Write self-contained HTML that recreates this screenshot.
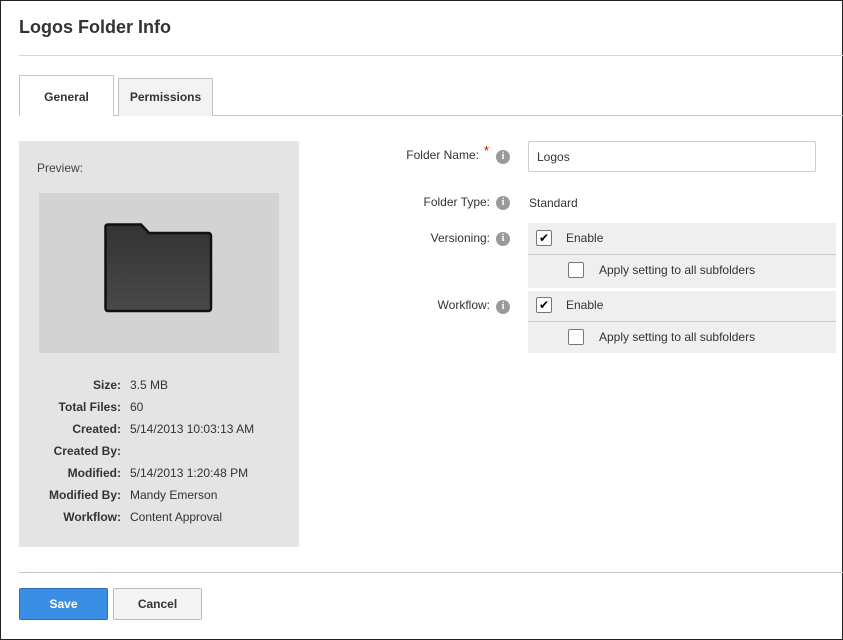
<!DOCTYPE html>
<html><head><style>
*{margin:0;padding:0;box-sizing:border-box}
body{width:843px;height:640px;position:relative;font-family:"Liberation Sans",Arial,sans-serif;font-size:12px;color:#333;background:#fff;overflow:hidden}
.a{position:absolute}
.frame{left:0;top:0;width:843px;height:640px;border:1px solid #222;border-top-color:#222}
.lbl{text-align:right;width:121px;font-weight:bold;color:#333}
.val{left:130px}
.rl{text-align:right;width:100px;left:390px}
.info{width:14px;height:14px;border-radius:50%;background:#999;color:#fff;font-size:10px;font-weight:bold;text-align:center;line-height:14px;font-family:"Liberation Serif",serif}
.cb{width:16px;height:16px;border:1px solid #777;background:#fff;border-radius:2px}
.ck{font-size:12px;color:#000}
</style></head><body>
<div class="a frame"></div>
<div class="a" style="left:19px;top:17px;font-size:18px;font-weight:bold;color:#333">Logos Folder Info</div>
<div class="a" style="left:19px;top:55px;width:824px;height:1px;background:#d6d6d6"></div>
<div class="a" style="left:19px;top:115px;width:824px;height:1px;background:#c4c4c4"></div>
<div class="a" style="left:118px;top:78px;width:95px;height:38px;background:#f3f3f3;border:1px solid #c4c4c4;border-bottom:none"></div>
<div class="a" style="left:118px;top:90px;width:95px;text-align:center;font-weight:bold">Permissions</div>
<div class="a" style="left:19px;top:75px;width:95px;height:41px;background:#fff;border:1px solid #c4c4c4;border-bottom:none"></div>
<div class="a" style="left:19px;top:90px;width:95px;text-align:center;font-weight:bold">General</div>
<div class="a" style="left:19px;top:141px;width:280px;height:406px;background:#e4e4e4"></div>
<div class="a" style="left:37px;top:161px;color:#444">Preview:</div>
<div class="a" style="left:39px;top:193px;width:240px;height:160px;background:#d3d3d3"></div>
<svg class="a" style="left:103px;top:223px" width="110" height="90" viewBox="0 0 110 90">
<defs><linearGradient id="g" x1="0" y1="0" x2="0" y2="1"><stop offset="0" stop-color="#333"/><stop offset="1" stop-color="#4a4a4a"/></linearGradient></defs>
<path d="M2.5 4 Q2.5 1.5 5 1.5 H38 L46 10 H105 Q108 10 108 13 V85 Q108 88 105 88 H5 Q2.5 88 2.5 85 Z" fill="url(#g)" stroke="#111" stroke-width="2.5"/>
</svg>
<div class="a lbl" style="top:378px">Size:</div><div class="a val" style="top:378px">3.5 MB</div>
<div class="a lbl" style="top:400px">Total Files:</div><div class="a val" style="top:400px">60</div>
<div class="a lbl" style="top:422px">Created:</div><div class="a val" style="top:422px">5/14/2013 10:03:13 AM</div>
<div class="a lbl" style="top:444px">Created By:</div>
<div class="a lbl" style="top:466px">Modified:</div><div class="a val" style="top:466px">5/14/2013 1:20:48 PM</div>
<div class="a lbl" style="top:488px">Modified By:</div><div class="a val" style="top:488px">Mandy Emerson</div>
<div class="a lbl" style="top:510px">Workflow:</div><div class="a val" style="top:510px">Content Approval</div>
<div class="a rl" style="top:148px;left:379px">Folder Name:</div>
<div class="a" style="left:484px;top:143px;color:#d00;font-size:13px">*</div>
<div class="a info" style="left:496px;top:150px">i</div>
<div class="a" style="left:528px;top:141px;width:288px;height:31px;border:1px solid #ccc;border-radius:2px"></div>
<div class="a" style="left:537px;top:150px">Logos</div>
<div class="a rl" style="top:195px">Folder Type:</div>
<div class="a info" style="left:496px;top:196px">i</div>
<div class="a" style="left:529px;top:196px">Standard</div>
<div class="a rl" style="top:231px">Versioning:</div>
<div class="a info" style="left:496px;top:232px">i</div>
<div class="a" style="left:528px;top:223px;width:308px;height:65px;background:#efefef"></div>
<div class="a" style="left:528px;top:254px;width:308px;height:1px;background:#c8c8c8"></div>
<div class="a cb" style="left:536px;top:230px"></div><div class="a ck" style="left:539px;top:231px">✔</div>
<div class="a" style="left:566px;top:231px">Enable</div>
<div class="a cb" style="left:568px;top:262px"></div>
<div class="a" style="left:599px;top:263px">Apply setting to all subfolders</div>
<div class="a rl" style="top:298px">Workflow:</div>
<div class="a info" style="left:496px;top:300px">i</div>
<div class="a" style="left:528px;top:291px;width:308px;height:62px;background:#efefef"></div>
<div class="a" style="left:528px;top:321px;width:308px;height:1px;background:#c8c8c8"></div>
<div class="a cb" style="left:536px;top:297px"></div><div class="a ck" style="left:539px;top:298px">✔</div>
<div class="a" style="left:566px;top:298px">Enable</div>
<div class="a cb" style="left:568px;top:329px"></div>
<div class="a" style="left:599px;top:330px">Apply setting to all subfolders</div>
<div class="a" style="left:19px;top:572px;width:824px;height:1px;background:#c4c4c4"></div>
<div class="a" style="left:19px;top:588px;width:89px;height:32px;background:#3a8ee6;border:1px solid #2a6fb8;border-radius:2px;color:#fff;font-weight:bold;text-align:center;line-height:30px">Save</div>
<div class="a" style="left:113px;top:588px;width:89px;height:32px;background:#f4f4f4;border:1px solid #bbb;border-radius:2px;color:#333;font-weight:bold;text-align:center;line-height:30px">Cancel</div>
</body></html>
